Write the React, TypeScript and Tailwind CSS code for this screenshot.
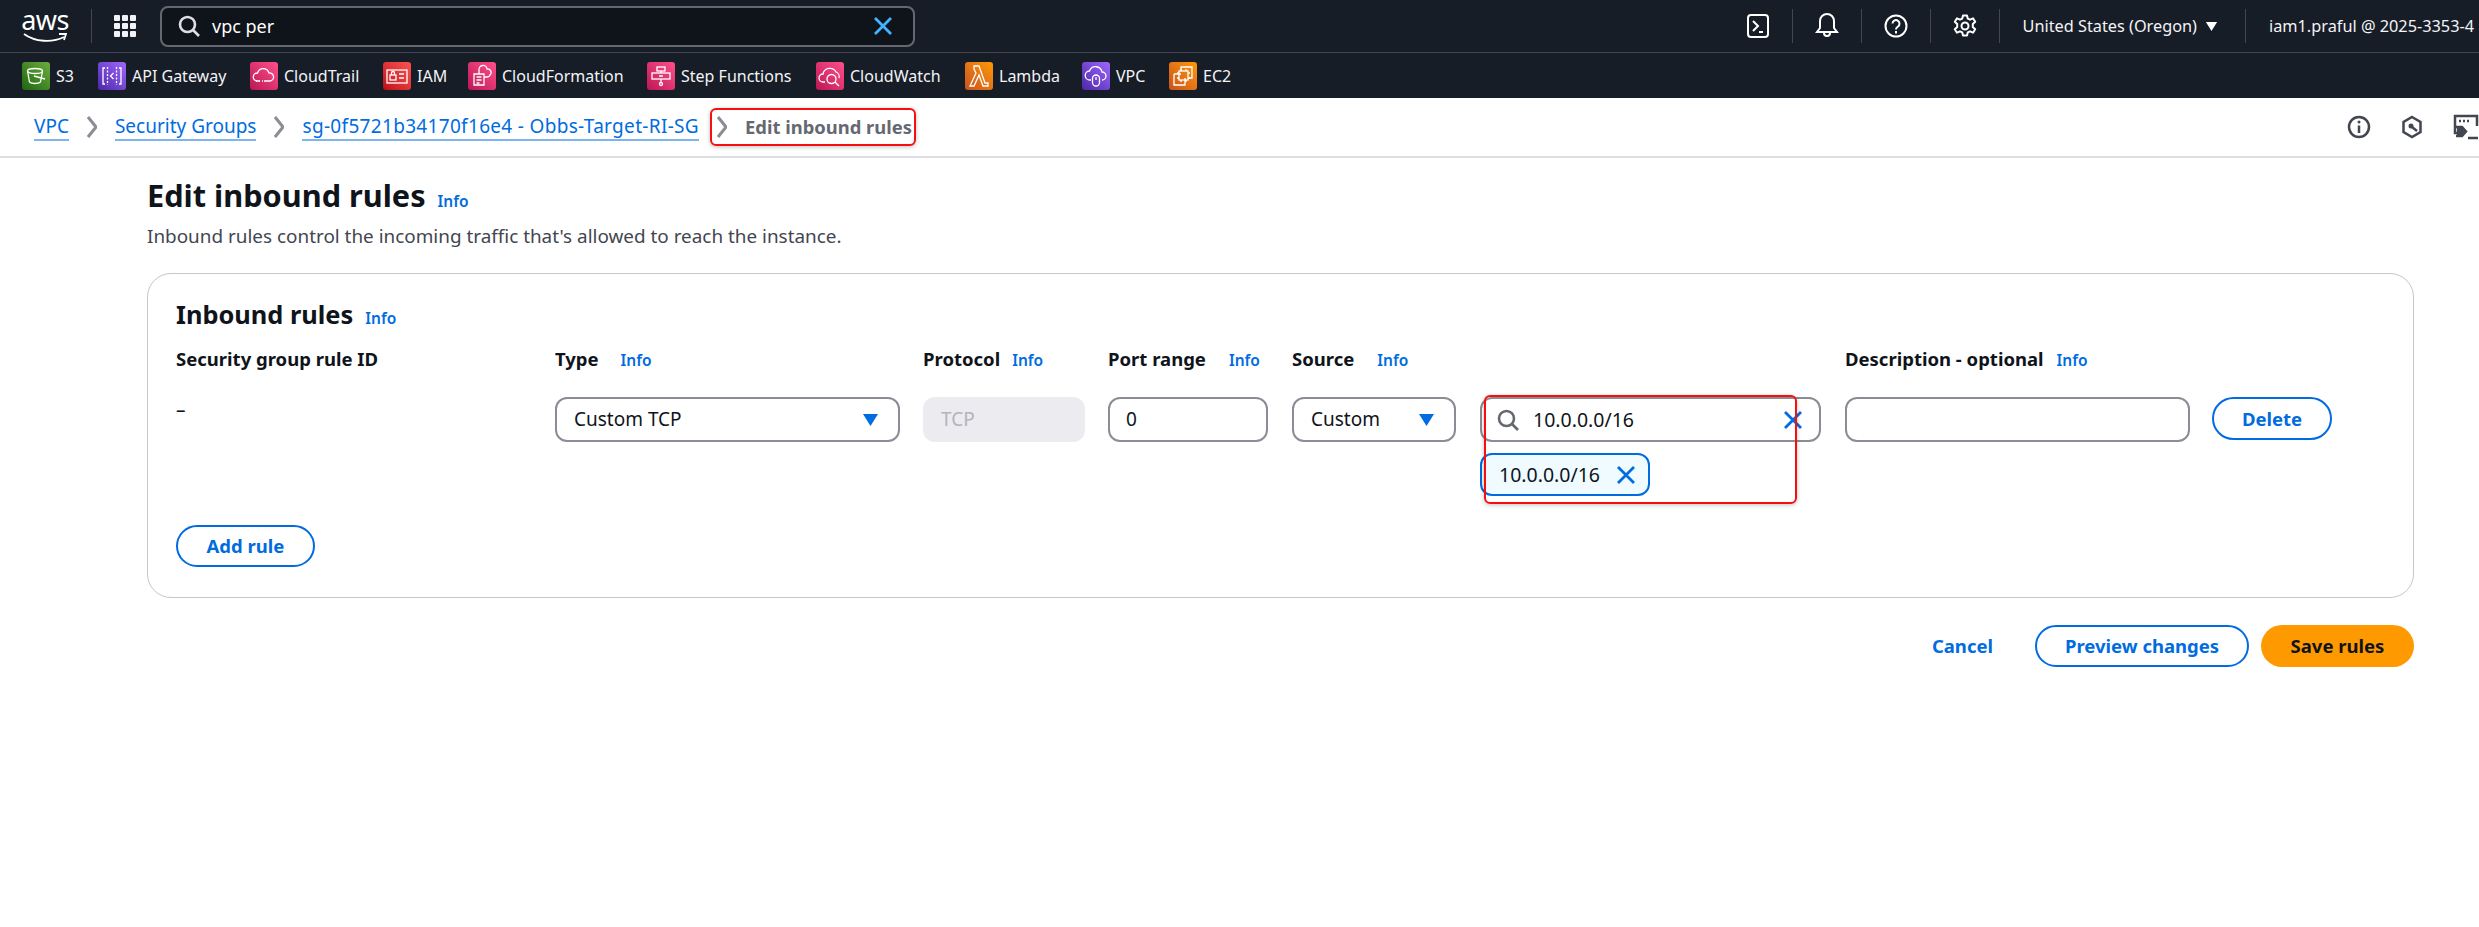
import type { ReactNode } from "react";

function InfoLink({ className = "" }: { className?: string }) {
  return <a className={"text-[15.5px] font-semibold text-[#006ce0] " + className}>Info</a>;
}

function XMark({ className = "" }: { className?: string }) {
  return (
    <svg viewBox="0 0 20 18" className={"h-[18px] w-5 " + className} fill="none" stroke="currentColor" strokeWidth="2.8">
      <path d="M2 1l16 16M18 1L2 17" />
    </svg>
  );
}

function SearchIcon({ className = "" }: { className?: string }) {
  return (
    <svg viewBox="0 0 22 22" className={"h-[22px] w-[22px] " + className} fill="none" stroke="currentColor" strokeWidth="2.6">
      <circle cx="9.5" cy="9.5" r="7.5" />
      <path d="M15 15l6 6" />
    </svg>
  );
}

function Caret({ className = "" }: { className?: string }) {
  return (
    <svg viewBox="0 0 15 12" className={"h-3 w-[15px] " + className} fill="currentColor">
      <path d="M0 0h15L7.5 12z" />
    </svg>
  );
}

function Fav({ label, color, w, children }: { label: string; color: string; w: string; children: ReactNode }) {
  return (
    <div className={"flex items-center " + w}>
      <span className={"mr-1.5 h-7 w-7 shrink-0 rounded-[3px] bg-linear-to-tr " + color}>
        <svg viewBox="0 0 28 28" className="h-7 w-7" fill="none" stroke="white" strokeWidth="1.3">{children}</svg>
      </span>
      <span className="text-[16px] whitespace-nowrap text-[#f3f3f7]">{label}</span>
    </div>
  );
}

function Crumb({ label, className = "" }: { label: string; className?: string }) {
  return (
    <>
      <a className={"whitespace-nowrap border-b-2 border-[#006ce0]/50 text-[19px] leading-[25px] text-[#006ce0] " + className}>{label}</a>
      <Chevron />
    </>
  );
}

function Chevron() {
  return (
    <svg viewBox="0 0 10 22" className="mx-[18px] h-[22px] w-2.5 text-[#8c8c94]" fill="none" stroke="currentColor" strokeWidth="3">
      <path d="M1 1l8 10-8 10" />
    </svg>
  );
}

function Sep({ className = "mx-[22px]" }: { className?: string }) {
  return <span className={"h-[34px] w-px bg-[#424650] " + className} />;
}

const boxCls = "rounded-xl border-2 border-[#8c8c94]";

export default function App() {
  return (
    <div className="relative h-[927px] w-[2479px] overflow-hidden bg-white font-['Noto_Sans',sans-serif] text-[#0f141a]">
      <header className="flex h-[53px] items-center border-b border-[#424650] bg-[#161d26] text-white">
        <div className="ml-[23px] flex w-11 flex-col items-center">
          <span className="h-[20px] text-[27px] leading-[20px] tracking-tight">aws</span>
          <svg viewBox="0 0 44 11" className="mt-0.5 h-[11px] w-11" fill="none" stroke="white" strokeWidth="1.8">
            <path d="M1 2c11 8 28 9 40 3M36 2h7l-2 6" />
          </svg>
        </div>
        <Sep className="ml-6 mr-[22px]" />
        <svg viewBox="0 0 22 22" className="h-[22px] w-[22px]" fill="#f3f3f7">
          <rect width="6" height="6" rx="1" /><rect x="8" width="6" height="6" rx="1" /><rect x="16" width="6" height="6" rx="1" />
          <rect y="8" width="6" height="6" rx="1" /><rect x="8" y="8" width="6" height="6" rx="1" /><rect x="16" y="8" width="6" height="6" rx="1" />
          <rect y="16" width="6" height="6" rx="1" /><rect x="8" y="16" width="6" height="6" rx="1" /><rect x="16" y="16" width="6" height="6" rx="1" />
        </svg>
        <div className="ml-6 flex h-[41px] w-[755px] items-center rounded-lg border-2 border-[#656871] bg-[#0f141a] pl-4 pr-5">
          <SearchIcon className="text-[#dedee3]" />
          <span className="ml-3 flex-1 text-[18px]">vpc per</span>
          <XMark className="text-[#42b4ff]" />
        </div>
        <div className="ml-auto flex items-center">
          <svg viewBox="0 0 22 24" className="h-6 w-[22px]" fill="none" stroke="white" strokeWidth="2">
            <rect x="1" y="1" width="20" height="22" rx="3" />
            <path d="M6 7l5 5-5 5M12 18h4" />
          </svg>
          <Sep className="ml-[23px] mr-[22px]" />
          <svg viewBox="0 0 24 28" className="h-7 w-6" fill="none" stroke="white" strokeWidth="2">
            <path d="M12 2a7 7 0 0 0-7 7v7l-3 4h20l-3-4V9a7 7 0 0 0-7-7zM9 21a3 3 0 0 0 6 0" />
          </svg>
          <Sep />
          <svg viewBox="0 0 24 24" className="h-6 w-6" fill="none" stroke="white" strokeWidth="2">
            <circle cx="12" cy="12" r="10.5" />
            <path d="M8.5 9.5a3.5 3.5 0 1 1 5.5 3c-1.4.9-2 1.5-2 3M12 17v2.5" />
          </svg>
          <Sep />
          <svg viewBox="0 0 24 24" className="h-6 w-6" fill="none" stroke="white" strokeWidth="2" strokeLinejoin="round">
            <path d="M10 1.5h4l.8 3.2 2.2 1 3-1.4 2.2 3.4-2.4 2.3v3l2.4 2.3-2.2 3.4-3-1.4-2.2 1-.8 3.2h-4l-.8-3.2-2.2-1-3 1.4-2.2-3.4 2.4-2.3v-3L1.8 7.7l2.2-3.4 3 1.4 2.2-1z" />
            <circle cx="12" cy="12" r="3.5" />
          </svg>
          <Sep />
          <span className="text-[16.3px] text-[#f3f3f7]">United States (Oregon)</span>
          <Caret className="ml-[7px] h-[9px] w-[11px]" />
          <Sep className="ml-[26px] mr-[23px]" />
          <span className="w-[210px] overflow-hidden whitespace-nowrap text-[16.3px] text-[#f3f3f7]">iam1.praful @ 2025-3353-4</span>
        </div>
      </header>

      <nav className="flex h-[45px] items-center bg-[#161d26] pl-[22px]">
        <Fav label="S3" w="w-[76px]" color="from-[#1b660f] to-[#6cae3e]">
          <ellipse cx="13" cy="9" rx="7.5" ry="2.5" />
          <path d="M5.5 9l2 11c2 2 9 2 11 0l2-11M12 14l11 3" />
        </Fav>
        <Fav label="API Gateway" w="w-[152px]" color="from-[#4d27a8] to-[#a166ff]">
          <path d="M7 6H5v16h2M21 6h2v16h-2M15.5 11l-3 3 3 3" />
          <path d="M9.5 5v18M18.5 5v18" strokeDasharray="2 1.5" />
        </Fav>
        <Fav label="CloudTrail" w="w-[133px]" color="from-[#bc1356] to-[#ff4f8b]">
          <path d="M10 19H7a4 4 0 0 1 .5-8 6 6 0 0 1 11.5 0 4 4 0 0 1 1 8H14" />
          <path d="M6 19h1M9 19h1M12 19h1" />
        </Fav>
        <Fav label="IAM" w="w-[85px]" color="from-[#bd0816] to-[#ff5252]">
          <rect x="4" y="8" width="20" height="13" />
          <rect x="7" y="13" width="6" height="5" />
          <path d="M8.5 13v-2a1.5 1.5 0 0 1 3 0v2M16 12h5M16 16h5" />
        </Fav>
        <Fav label="CloudFormation" w="w-[179px]" color="from-[#bc1356] to-[#ff4f8b]">
          <path d="M6 12h10v11H6zM8.5 15h5M8.5 18h5M8.5 21h3M11 12V8a4 4 0 0 1 8-1 3.5 3.5 0 0 1 3 6 3 3 0 0 1-3 2h-3" />
        </Fav>
        <Fav label="Step Functions" w="w-[169px]" color="from-[#bc1356] to-[#ff4f8b]">
          <rect x="10" y="5" width="8" height="4" />
          <rect x="5" y="11" width="18" height="6" />
          <path d="M14 9v2M14 17v3M12 14h4" />
          <circle cx="14" cy="22" r="1.5" />
        </Fav>
        <Fav label="CloudWatch" w="w-[149px]" color="from-[#bc1356] to-[#ff4f8b]">
          <path d="M9 20H7a4 4 0 0 1 0-8 7 7 0 0 1 13-2 5 5 0 0 1 3 6" />
          <circle cx="15.5" cy="17" r="4.5" />
          <path d="M19 20l4 4" />
        </Fav>
        <Fav label="Lambda" w="w-[117px]" color="from-[#c8511b] to-[#ff9900]">
          <path d="M9 4h5l6 17h3v3h-5l-4-11-5 11H5l6-13-2-4H9z" />
        </Fav>
        <Fav label="VPC" w="w-[87px]" color="from-[#4d27a8] to-[#a166ff]">
          <path d="M9 18H8a4.5 4.5 0 0 1-.5-9 6.5 6.5 0 0 1 12.5 1 4 4 0 0 1 0 8" />
          <rect x="10.5" y="13" width="7" height="11" rx="3.5" />
          <path d="M14 15v3" />
        </Fav>
        <Fav label="EC2" w="w-[60px]" color="from-[#c8511b] to-[#ff9900]">
          <path d="M12 9V5h11v11h-4M5 12h7M5 12v11h11v-7" />
          <rect x="10" y="9" width="9" height="9" />
          <path d="M12 7v2M17 7v2M12 18v2M17 18v2M8 11h2M8 16h2M19 11h2M19 16h2" />
        </Fav>
      </nav>

      <div className="flex h-[60px] items-center border-b-2 border-[#dedee3] pl-[34px]">
        <Crumb label="VPC" />
        <Crumb label="Security Groups" />
        <Crumb label="sg-0f5721b34170f16e4 - Obbs-Target-RI-SG" className="tracking-[0.32px]" />
        <span className="text-[18.4px] font-bold text-[#656871]">Edit inbound rules</span>
        <div className="ml-auto flex items-center gap-[29px] text-[#424650]">
          <svg viewBox="0 0 24 24" className="h-6 w-6" fill="none" stroke="currentColor" strokeWidth="2.5">
            <circle cx="12" cy="12" r="10" />
            <path d="M12 10.5V18" />
            <circle cx="12" cy="7" r="1.5" fill="currentColor" stroke="none" />
          </svg>
          <svg viewBox="0 0 24 24" className="h-6 w-6" fill="none" stroke="currentColor" strokeWidth="2.5">
            <path d="M12 2l8.5 5v10L12 22l-8.5-5V7z" />
            <circle cx="11" cy="11" r="2.5" fill="currentColor" stroke="none" />
            <path d="M12 12l5 4" />
          </svg>
          <svg viewBox="0 0 26 26" className="h-[26px] w-[26px]" fill="none" stroke="currentColor" strokeWidth="2.5">
            <path d="M9 19H2V2h22v10" />
            <path d="M6 7h2M10 7h2M14 7h2" strokeWidth="2.5" />
            <path d="M3 13h6l4 4.5-4 4.5H3M15 24h10" />
            <path d="M4 14h5l3 3.5-3 3.5H4z" fill="currentColor" stroke="none" />
          </svg>
        </div>
      </div>

      <main className="pl-[147px] pr-[65px] pt-[17px]">
        <h1 className="flex h-10 items-baseline text-[30.7px] font-bold leading-10">
          Edit inbound rules <InfoLink className="ml-3" />
        </h1>
        <p className="mt-[7px] text-[18.9px] leading-7 text-[#424650]">
          Inbound rules control the incoming traffic that's allowed to reach the instance.
        </p>

        <section className="mt-[23px] h-[325px] rounded-3xl border border-[#c6c6cd] px-7 pt-6">
          <h2 className="flex h-8 items-baseline text-[25.4px] font-bold leading-8">
            Inbound rules <InfoLink className="ml-3" />
          </h2>
          <div className="mt-[15px] flex h-7 items-baseline text-[18.5px] font-bold leading-7">
            <span className="w-[379px]">Security group rule ID</span>
            <span className="flex w-[368px] items-baseline">Type <InfoLink className="ml-[22px]" /></span>
            <span className="flex w-[185px] items-baseline">Protocol <InfoLink className="ml-3" /></span>
            <span className="flex w-[184px] items-baseline">Port range <InfoLink className="ml-[23px]" /></span>
            <span className="flex w-[553px] items-baseline">Source <InfoLink className="ml-[23px]" /></span>
            <span className="flex items-baseline">Description - optional <InfoLink className="ml-[13px]" /></span>
          </div>
          <div className="mt-6 flex h-[45px] text-[19px]">
            <span className="w-[379px] leading-[26px]">–</span>
            <div className={"flex w-[345px] items-center justify-between pl-[17px] pr-[20px] " + boxCls}>
              Custom TCP <Caret className="text-[#006ce0]" />
            </div>
            <div className="ml-[23px] flex w-[162px] items-center rounded-xl bg-[#ebebf0] px-[18px] text-[#b4b4bb]">TCP</div>
            <div className={"ml-[23px] flex w-[160px] items-center px-4 " + boxCls}>0</div>
            <div className={"ml-6 flex w-[164px] items-center justify-between pl-[17px] pr-[20px] " + boxCls}>
              Custom <Caret className="text-[#006ce0]" />
            </div>
            <div className="ml-6">
              <div className={"flex h-[45px] w-[341px] items-center pl-[15px] pr-4 text-[19.5px] " + boxCls}>
                <SearchIcon className="text-[#656871]" />
                <span className="ml-3.5 flex-1">10.0.0.0/16</span>
                <XMark className="text-[#006ce0]" />
              </div>
              <div className="mt-[11px] flex h-[43px] w-[170px] items-center justify-between rounded-xl border-2 border-[#006ce0] bg-[#f0fbff] pl-[17px] pr-3 text-[19.5px]">
                10.0.0.0/16 <XMark className="text-[#006ce0]" />
              </div>
            </div>
            <div className={"ml-6 w-[345px] " + boxCls} />
            <button className="ml-[22px] h-[43px] w-[120px] rounded-full border-2 border-[#006ce0] text-[18.5px] font-bold text-[#006ce0]">Delete</button>
          </div>
          <button className="mt-[83px] h-[42px] w-[139px] rounded-full border-2 border-[#006ce0] text-[18.5px] font-bold text-[#006ce0]">Add rule</button>
        </section>

        <div className="mt-[27px] flex items-center justify-end text-[18.5px] font-bold">
          <a className="text-[#006ce0]">Cancel</a>
          <button className="ml-[42px] h-[42px] w-[214px] rounded-full border-2 border-[#006ce0] text-[#006ce0]">Preview changes</button>
          <button className="ml-3 h-[42px] w-[153px] rounded-full bg-[#ff9900]">Save rules</button>
        </div>
      </main>

      {/* red annotations over the page */}
      <div className="absolute left-[710px] top-[108px] h-[38px] w-[206px] rounded-md border-2 border-[#f50f0f] shadow-[0_1px_4px_rgba(0,0,0,0.25)]" />
      <div className="absolute left-[1484px] top-[395px] h-[109px] w-[313px] rounded-md border-2 border-[#f50f0f] shadow-[0_1px_4px_rgba(0,0,0,0.25)]" />
    </div>
  );
}
